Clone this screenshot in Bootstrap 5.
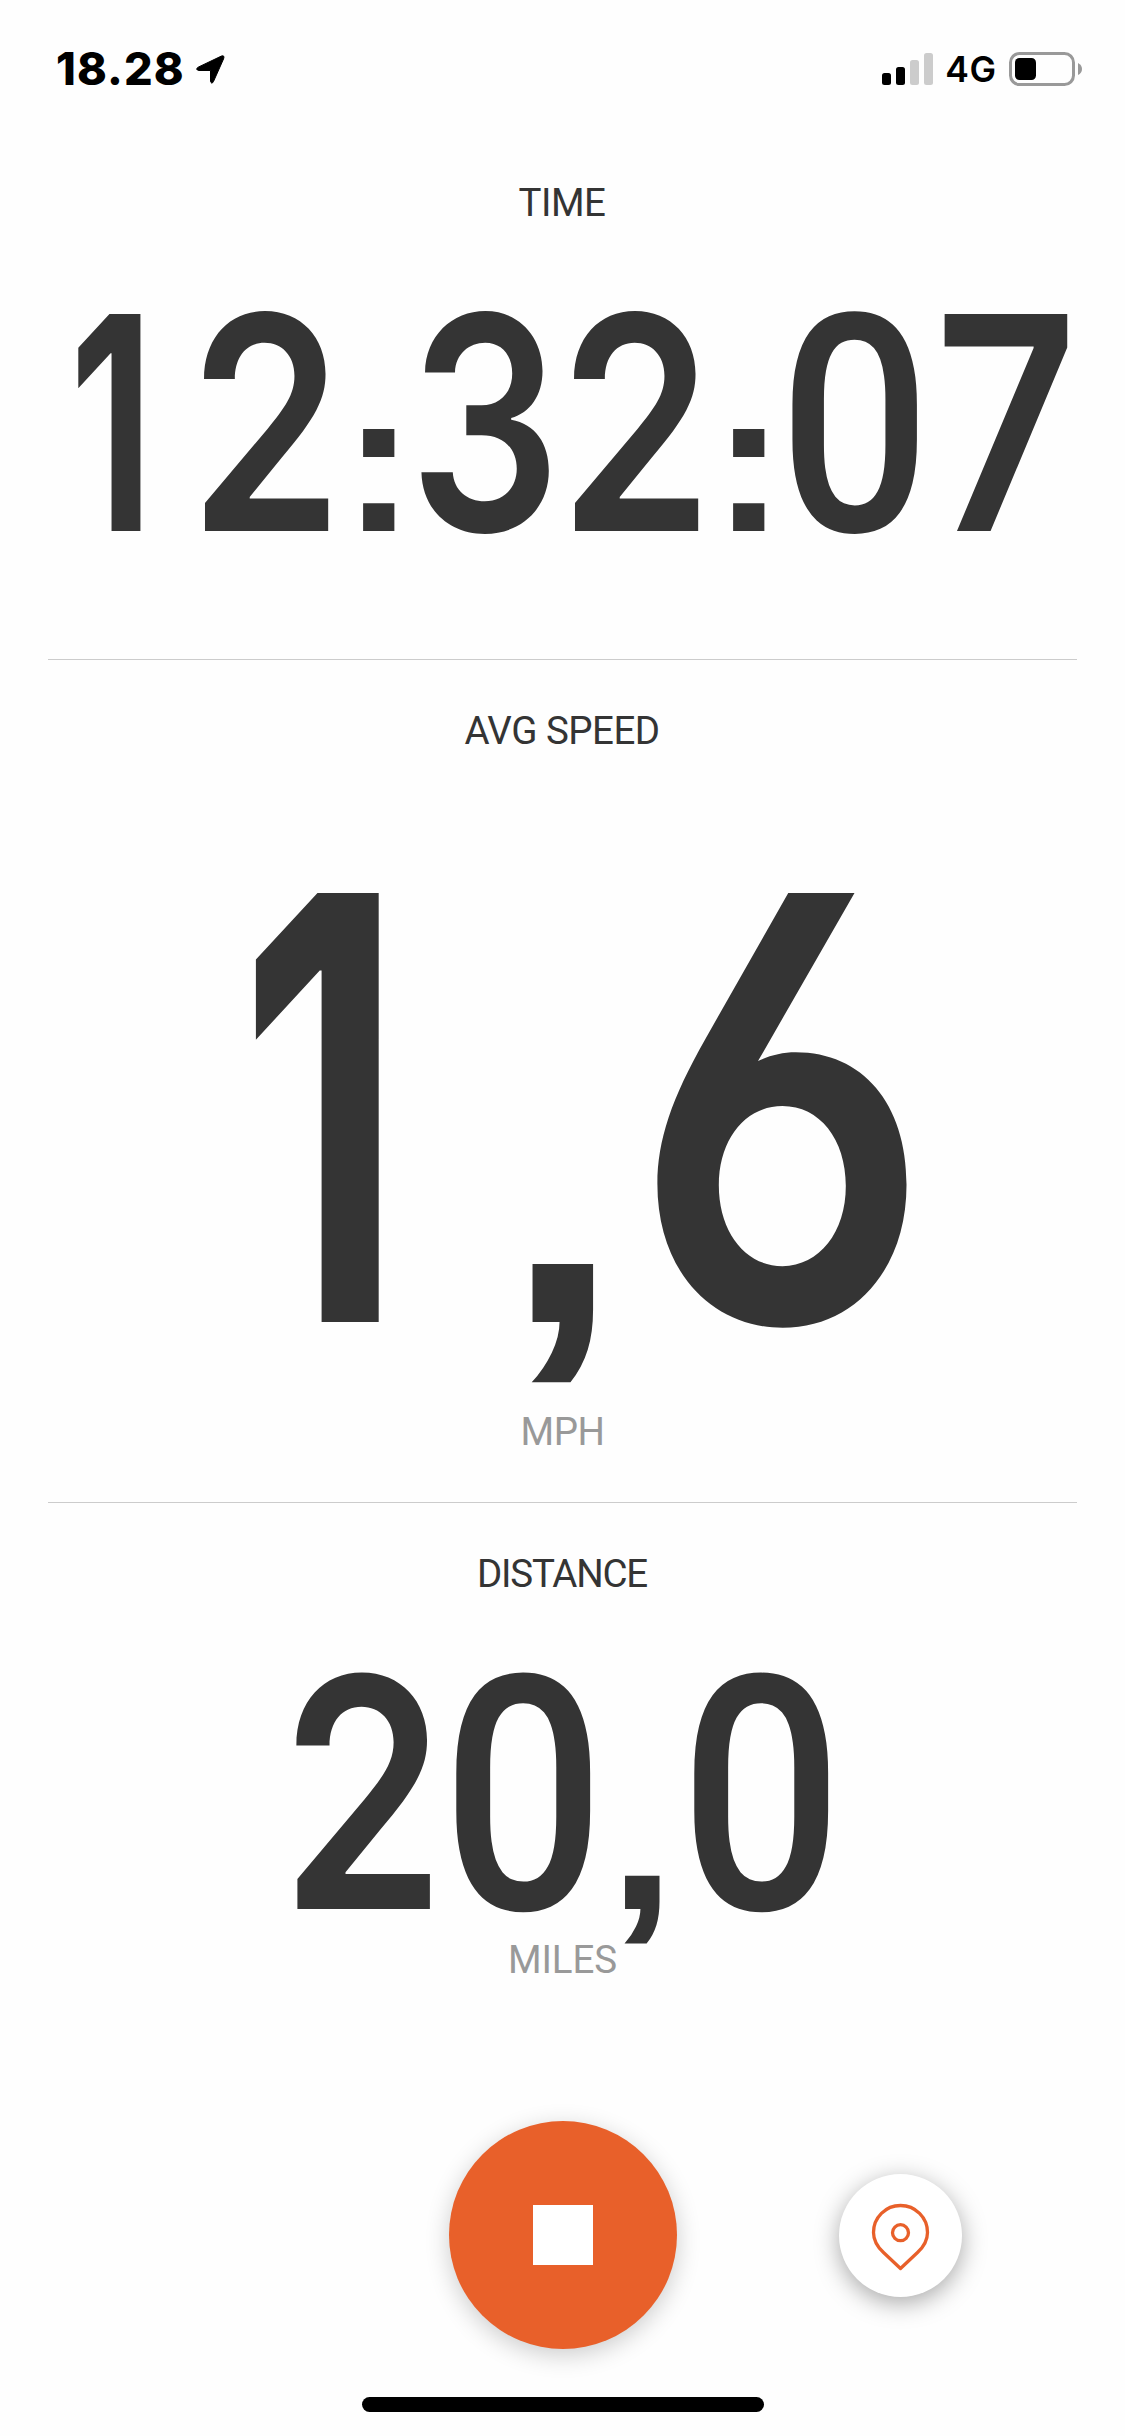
<!DOCTYPE html>
<html lang="en">
<head>
<meta charset="utf-8">
<meta name="viewport" content="width=device-width, initial-scale=1">
<title>Activity tracker</title>
<link href="https://cdn.jsdelivr.net/npm/bootstrap@5.3.0/dist/css/bootstrap.min.css" rel="stylesheet">
<style>
  body { background: #fefefe; color: #343434; font-family: Roboto, "Liberation Sans", sans-serif; }
  .screen { width: 1125px; height: 2436px; overflow: hidden; }
  .statusbar { height: 132px; padding: 0 42px 0 56px; color: #000; font-family: Inter, "Liberation Sans", sans-serif; }
  .statusbar > div { height: 138px; }
  .clock { font-size: 45px; font-weight: 800; letter-spacing: 1.1px; line-height: 44px; }
  .network { font-size: 35.5px; font-weight: 600; line-height: 44px; letter-spacing: .8px; margin: 2px 12px 0 11px; }
  .metric { margin: 0 48px; border-bottom: 1px solid #ccc; }
  .caption, .unit { font-size: 38.5px; line-height: 48px; letter-spacing: -.5px; }
  .caption { margin-top: 47px; padding-right: 1px; }
  .unit { color: #999; }
  .digits { font-weight: 500; margin-left: -40px; margin-right: -40px; }
  .digits > span { display: flex; justify-content: center; flex: none; }
  .digits > span > b { font-weight: inherit; transform: scaleX(.875); }
  .digits > .grot { font-family: Inter, Roboto, sans-serif; font-weight: 600; line-height: .9; }
  .digits > .grot > b { font-size: .978em; transform: scaleX(.83); }
  .digits > .three > b { transform: scaleX(.8); }
  .digits > .seven > b { transform: scaleX(.83); }
  .digits > .six > b { transform: scaleX(.84); font-feature-settings: "ss01", "cv03"; }
  .digits > .one { font-weight: 700; }
  .digits > .one > b { transform: scaleX(.65); }
  .digits > .sep { font-family: "Liberation Sans", Arimo, sans-serif; font-weight: 700; line-height: 1; }
  .digits > .sep > b { transform: scaleX(1.1); }

  .m-time { height: 528px; }
  .m-time .digits { font-size: 305px; line-height: 307px; margin-top: 46px; padding-right: 4px; }
  .m-time .digits > span { width: 151px; }
  .m-time .digits > .one { padding-right: 7px; }
  .m-time .digits > .sep { width: 68px; font-size: 202px; padding-left: 6px; }

  .m-speed { height: 843px; }
  .m-speed .digits { font-size: 603px; line-height: 560px; height: 560px; margin-top: 73px; padding-right: 14px; }
  .m-speed .digits > span { width: 303px; }
  .m-speed .digits > .grot { line-height: 560px; }
  .m-speed .digits > .one { padding-right: 16px; }
  .m-speed .digits > .sep { width: 150px; font-size: 390px; padding-left: 14px; }
  .m-speed .unit { margin-top: 20px; }

  .m-distance { border: 0; }
  .m-distance .caption { letter-spacing: -1.2px; }
  .m-distance .digits { font-size: 328px; line-height: 270px; height: 270px; margin-top: 64px; padding-right: 1px; }
  .m-distance .digits > span { width: 160px; }
  .m-distance .digits > .grot { line-height: .7; }
  .m-distance .digits > .sep { width: 78px; font-size: 222px; }
  .m-distance .unit { margin-top: 4px; letter-spacing: -.1px; }

  .controls { margin-top: 137px; padding-left: 1px; gap: 162px; }
  .stop-btn { width: 228px; height: 228px; background: #e8602a; box-shadow: 0 6px 24px rgba(0,0,0,.2); }
  .stop-btn i { width: 60px; height: 60px; background: #fff; }
  .pin-btn, .pin-spacer { width: 123px; height: 123px; }
  .pin-btn { background: #fff; box-shadow: 0 6px 24px rgba(0,0,0,.34); }
  .home-bar { width: 402px; height: 15px; margin-top: 48px; background: #000; }
</style>
<script src="https://cdn.jsdelivr.net/npm/bootstrap@5.3.0/dist/js/bootstrap.bundle.min.js" defer></script>
</head>
<body>
<main class="screen d-flex flex-column">
  <header class="statusbar d-flex justify-content-between">
    <div class="d-flex align-items-center">
      <span class="clock">18.28</span>
      <svg class="ms-2" width="34" height="32" viewBox="0 0 34 32"><path d="M5.500 14 28.500 3Q32 2 30.500 6L20.500 28.500Q18.500 32 17.500 28V17.500H6Q1.500 16.500 5.500 14Z" fill="#000" stroke="#000" stroke-linejoin="round"/></svg>
    </div>
    <div class="d-flex align-items-center">
      <svg width="52" height="32" viewBox="0 0 52 32"><g fill="#000"><rect y="20" width="9" height="12" rx="2.500"/><rect x="14" y="14" width="9" height="18" rx="2.500"/></g><g fill="#ccc"><rect x="28" y="7" width="9" height="25" rx="2.500"/><rect x="42" width="9" height="32" rx="2.500"/></g></svg>
      <span class="network">4G</span>
      <svg width="74" height="34" viewBox="0 0 74 34"><rect x="1.500" y="1.500" width="63" height="31" rx="9" fill="none" stroke="#999" stroke-width="3"/><rect x="6" y="6" width="21" height="22" rx="4.500"/><path d="M69 11q4 2 4 6t-4 6z" fill="#999"/></svg>
    </div>
  </header>

  <section class="metric m-time text-center">
    <div class="caption">TIME</div>
    <div class="digits d-flex justify-content-center align-items-baseline"><span class="grot one"><b>1</b></span><span class="grot"><b>2</b></span><span class="sep"><b>:</b></span><span class="grot three"><b>3</b></span><span class="grot"><b>2</b></span><span class="sep"><b>:</b></span><span><b>0</b></span><span class="grot seven"><b>7</b></span></div>
  </section>

  <section class="metric m-speed text-center">
    <div class="caption">AVG SPEED</div>
    <div class="digits d-flex justify-content-center align-items-baseline"><span class="grot one"><b>1</b></span><span class="sep"><b>,</b></span><span class="grot six"><b>6</b></span></div>
    <div class="unit">MPH</div>
  </section>

  <section class="metric m-distance text-center">
    <div class="caption">DISTANCE</div>
    <div class="digits d-flex justify-content-center align-items-baseline"><span class="grot"><b>2</b></span><span><b>0</b></span><span class="sep"><b>,</b></span><span><b>0</b></span></div>
    <div class="unit">MILES</div>
  </section>

  <div class="controls d-flex justify-content-center align-items-center">
    <div class="pin-spacer"></div>
    <button type="button" class="stop-btn btn border-0 rounded-circle p-0 d-flex justify-content-center align-items-center" aria-label="Stop"><i></i></button>
    <button type="button" class="pin-btn btn border-0 rounded-circle p-0" aria-label="Map">
      <svg class="d-block" width="123" height="123" viewBox="0 0 123 123" fill="none" stroke="#e8602a" stroke-width="3.300" stroke-linejoin="round"><path d="M61.500 94.500 44.500 78.500C38 72.500 34.500 66 34.500 58.500a27 27 0 0 1 54 0C88.500 66 85 72.500 78.500 78.500Z"/><circle cx="61.500" cy="58.700" r="8"/></svg>
    </button>
  </div>
  <div class="home-bar rounded-pill mx-auto"></div>
</main>
</body>
</html>
